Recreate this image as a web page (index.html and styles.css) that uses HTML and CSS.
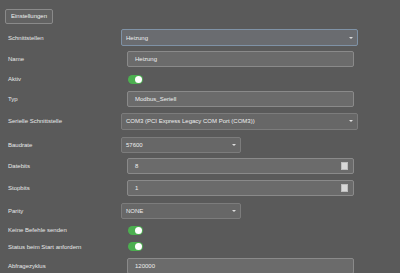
FILE: index.html
```html
<!DOCTYPE html>
<html lang="de">
<head>
<meta charset="utf-8">
<link rel="stylesheet" href="styles.css">
</head>
<body>
<div class="page">
  <div class="tabs"><span class="tab">Einstellungen</span></div>
  <div class="form">
    <div class="row r21"><div class="label">Schnittstellen</div><div class="ctl"><div class="select wide focus"><span>Heizung</span><i class="chev"></i></div></div></div>
    <div class="row r21"><div class="label">Name</div><div class="ctl"><div class="input">Heizung</div></div></div>
    <div class="row r20"><div class="label">Aktiv</div><div class="ctl"><span class="toggle"></span></div></div>
    <div class="row r19"><div class="label">Typ</div><div class="ctl"><div class="input">Modbus_Seriell</div></div></div>
    <div class="row r26"><div class="label">Serielle Schnittstelle</div><div class="ctl"><div class="select wide"><span>COM3 (PCI Express Legacy COM Port (COM3))</span><i class="chev"></i></div></div></div>
    <div class="row r21"><div class="label">Baudrate</div><div class="ctl"><div class="select narrow"><span>57600</span><i class="chev"></i></div></div></div>
    <div class="row r22"><div class="label">Datebits</div><div class="ctl"><div class="input num"><span>8</span><i class="spin"></i></div></div></div>
    <div class="row r22"><div class="label">Stopbits</div><div class="ctl"><div class="input num"><span>1</span><i class="spin"></i></div></div></div>
    <div class="row r23"><div class="label">Parity</div><div class="ctl"><div class="select narrow"><span>NONE</span><i class="chev"></i></div></div></div>
    <div class="row r16"><div class="label">Keine Befehle senden</div><div class="ctl"><span class="toggle"></span></div></div>
    <div class="row r17"><div class="label">Status beim Start anfordern</div><div class="ctl"><span class="toggle"></span></div></div>
    <div class="row r22"><div class="label">Abfragezyklus</div><div class="ctl"><div class="input">120000</div></div></div>
  </div>
</div>
</body>
</html>
```
FILE: styles.css
```css
html, body {
  margin: 0;
  padding: 0;
  background: #5a5a5a;
  overflow: hidden;
}
body {
  font-family: "Liberation Sans", Arial, sans-serif;
  font-size: 6px;
  color: #e6e6e6;
}
.page {
  width: 400px;
  height: 273px;
}
.tabs {
  padding: 9px 0 0 5px;
  height: 18px;
}
.tab {
  display: inline-block;
  box-sizing: border-box;
  height: 15px;
  line-height: 13px;
  padding: 0 5px;
  border: 1px solid #8a8a8a;
  border-radius: 2px;
  background: #626262;
  color: #f0f0f0;
}
.form {
  display: flex;
  flex-direction: column;
}
.row {
  display: flex;
  align-items: center;
}
.r16 { height: 16px; }
.r17 { height: 17px; }
.r19 { height: 19px; }
.r20 { height: 20px; }
.r21 { height: 21px; }
.r22 { height: 22px; }
.r23 { height: 23px; }
.r26 { height: 26px; }
.label {
  width: 113px;
  padding-left: 8px;
  color: #e8e8e8;
}
.ctl {
  flex: 1;
  display: flex;
  align-items: center;
}
.select {
  box-sizing: border-box;
  height: 17px;
  display: flex;
  align-items: center;
  justify-content: space-between;
  padding: 0 4px 0 4px;
  background: #676767;
  border: 1px solid #7c7c7c;
  border-radius: 2px;
  color: #eeeeee;
}
.select.wide { width: 237px; }
.select.narrow { width: 120px; height: 16px; }
.select.focus {
  border-color: #7f92a6;
  background: #6a6c70;
}
.chev {
  width: 0;
  height: 0;
  border-left: 2px solid transparent;
  border-right: 2px solid transparent;
  border-top: 2px solid #dddddd;
}
.input {
  box-sizing: border-box;
  margin-left: 6px;
  width: 227px;
  height: 16px;
  line-height: 14px;
  padding: 0 7px;
  background: #6b6b6b;
  border: 1px solid #8a8a8a;
  border-radius: 2px;
  color: #eeeeee;
}
.input.num {
  display: flex;
  align-items: center;
  justify-content: space-between;
  padding-right: 5px;
}
.spin {
  width: 7px;
  height: 8px;
  background: #d8d8d8;
  border: 1px solid #bdbdbd;
  box-sizing: border-box;
}
.toggle {
  margin-left: 7px;
  position: relative;
  width: 15px;
  height: 9px;
  border-radius: 5px;
  background: #4caf50;
}
.toggle::after {
  content: "";
  position: absolute;
  right: 1px;
  top: 1px;
  width: 7px;
  height: 7px;
  border-radius: 50%;
  background: #ffffff;
}
```
